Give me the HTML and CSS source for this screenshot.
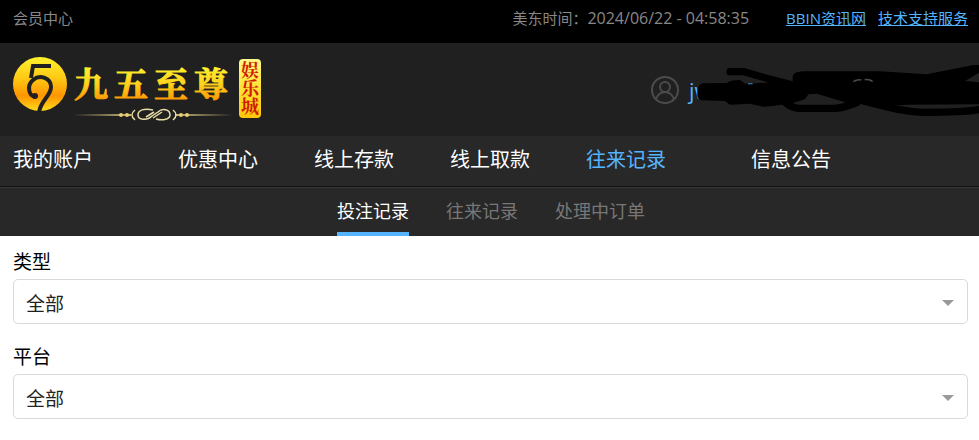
FILE: index.html
```html
<!DOCTYPE html>
<html lang="zh-CN">
<head>
    <meta charset="UTF-8">
    <meta name="viewport" content="width=device-width, initial-scale=1.0">
    <title>会员中心</title>
    <link rel="stylesheet" href="styles.css">
</head>
<body>
    <div class="topbar">
        <span>会员中心</span>
        <div class="topbar-right">
            <span class="time">美东时间：<span class="clock">2024/06/22 - 04:58:35</span></span>
            <a href="#">BBIN资讯网</a>
            <a href="#">技术支持服务</a>
        </div>
    </div>

    <header class="header">
        <svg class="logo" width="252" height="68" viewBox="0 0 252 68" role="img" aria-label="九五至尊娱乐城">
            <defs>
                <linearGradient id="gold" x1="0" y1="0" x2="0" y2="1">
                    <stop offset="0" stop-color="#fff22e"/>
                    <stop offset="0.4" stop-color="#ffc814"/>
                    <stop offset="0.72" stop-color="#ff9500"/>
                    <stop offset="1" stop-color="#ffdc1c"/>
                </linearGradient>
                <linearGradient id="goldText" gradientUnits="userSpaceOnUse" x1="0" y1="11" x2="0" y2="45">
                    <stop offset="0" stop-color="#fff22e"/>
                    <stop offset="0.5" stop-color="#ffd21c"/>
                    <stop offset="1" stop-color="#ff9500"/>
                </linearGradient>
                <linearGradient id="badge" x1="0" y1="0" x2="0" y2="1">
                    <stop offset="0" stop-color="#fff98a"/>
                    <stop offset="0.4" stop-color="#ffe640"/>
                    <stop offset="1" stop-color="#ffc60a"/>
                </linearGradient>
                <linearGradient id="line" x1="0" y1="0" x2="1" y2="0">
                    <stop offset="0" stop-color="#c9b878" stop-opacity="0"/>
                    <stop offset="1" stop-color="#c9b878"/>
                </linearGradient>
                <linearGradient id="lineEnd" x1="1" y1="0" x2="0" y2="0">
                    <stop offset="0" stop-color="#c9b878" stop-opacity="0"/>
                    <stop offset="1" stop-color="#c9b878"/>
                </linearGradient>
            </defs>
            <circle cx="27" cy="28" r="27" fill="url(#gold)"/>
            <g fill="none" stroke="#202020" stroke-width="4">
                <path d="M38 10H20L18 22"/>
                <path d="M22 41C15 39 14 29 20 24C27 18 38 22 38 31C38 40 28 44 26 56"/>
            </g>
            <circle cx="22" cy="40" r="3" fill="#202020"/>
            <g class="logo-name" fill="url(#goldText)" stroke="url(#goldText)">
                <text x="61 101 141 181" y="41">九五至尊</text>
            </g>
            <rect x="60" y="58" width="58" height="2" fill="url(#line)"/>
            <rect x="162" y="58" width="58" height="2" fill="url(#lineEnd)"/>
            <g fill="#e6cf74">
                <circle cx="108" cy="59" r="2"/>
                <circle cx="114" cy="59" r="2"/>
                <circle cx="168" cy="59" r="2"/>
                <circle cx="174" cy="59" r="2"/>
            </g>
            <g fill="none" stroke="#e8dca6" stroke-width="1.5">
                <path d="M122 54C118 57 118 61 122 64M160 54C164 57 164 61 160 64"/>
                <path d="M140 54C131 52 125 54 125 59C125 64 134 65 139 60L145 56C149 52 157 53 157 59C157 63 150 65 143 63"/>
                <path d="M133 61L141 56M140 62L149 56"/>
            </g>
            <rect x="226" y="3" width="22" height="59" rx="4" fill="url(#badge)"/>
            <text class="logo-badge" x="237" y="5">娱乐城</text>
        </svg>

        <div class="user">
            <svg class="avatar" width="28" height="28" viewBox="0 0 28 28" aria-hidden="true">
                <circle cx="14" cy="14" r="13"/>
                <circle cx="14" cy="11" r="5"/>
                <path d="M5 23C7 18 10 16 14 16C18 16 21 18 23 23"/>
            </svg>
            <span class="username">jw</span>
            <svg class="scribble" width="282" height="54" viewBox="171 33 846 162" aria-hidden="true">
                <path class="ink" d="M172 130Q172 98 190 97L260 96Q270 87 300 87L315 98L380 95L445 101L458 92L458 75Q462 62 490 61L720 61L860 70L1000 42L1017 42L1017 65L975 90L1017 94L1017 160L800 161L740 165L650 152L625 160L610 152L530 128L505 130L495 145L462 155L400 165L370 167L330 158L270 161L255 150L185 148Q172 146 172 130Z"/>
                <path class="stroke" d="M270 62L312 62L380 82L450 100"/>
                <path class="stroke" d="M430 150C445 162 455 170 475 172L585 172C610 172 620 165 650 155"/>
                <path class="stroke" d="M670 150C740 168 790 182 850 184C920 184 980 184 1020 175"/>
                <path class="hint" d="M640 92Q652 84 664 87M674 86Q690 84 698 92"/>
                <path class="hint-blue" d="M324 98H338"/>
            </svg>
        </div>
    </header>

    <nav class="nav">
        <a class="wide" href="#">我的账户</a>
        <a href="#">优惠中心</a>
        <a href="#">线上存款</a>
        <a href="#">线上取款</a>
        <a class="wide active" href="#">往来记录</a>
        <a href="#">信息公告</a>
    </nav>

    <nav class="subnav">
        <a class="active" href="#">投注记录</a>
        <a href="#">往来记录</a>
        <a href="#">处理中订单</a>
    </nav>

    <form class="filters">
        <div class="field">
            <label for="type">类型</label>
            <select id="type">
                <option>全部</option>
            </select>
        </div>
        <div class="field">
            <label for="platform">平台</label>
            <select id="platform">
                <option>全部</option>
            </select>
        </div>
    </form>
</body>
</html>
```
FILE: styles.css
```css
* {
    box-sizing: border-box;
}
body {
    margin: 0;
    background: #fff;
    color: #000;
    font-family: "Open Sans", "Noto Sans CJK SC", sans-serif;
}
a {
    color: inherit;
    text-decoration: none;
}

/* top bar */
.topbar {
    display: flex;
    justify-content: space-between;
    height: 43px;
    padding: 0 11px 0 13px;
    background: #000;
    color: #888;
    font-size: 15px;
    line-height: 37px;
}
.topbar-right {
    display: flex;
    gap: 12px;
}
.topbar-right a {
    color: #55b4ff;
    text-decoration: underline;
}
.time {
    margin-right: 25px;
}
.clock {
    font-size: 16px;
}

/* logo and user */
.header {
    display: flex;
    justify-content: space-between;
    align-items: center;
    height: 93px;
    padding-left: 13px;
    background: #202020;
    overflow: hidden;
}
.logo-name {
    font-family: "Noto Serif CJK SC", "Noto Sans CJK SC", serif;
    font-size: 34px;
    font-weight: 700;
    stroke-width: 1;
}
.logo-badge {
    fill: #d01c00;
    font-family: "Noto Serif CJK SC", "Noto Sans CJK SC", serif;
    font-size: 18px;
    font-weight: 700;
    writing-mode: vertical-rl;
}
.user {
    position: relative;
    display: flex;
    align-items: center;
    width: 328px;
}
.avatar {
    fill: none;
    stroke: #4b4b4b;
    stroke-width: 2;
}
.username {
    margin-left: 10px;
    color: #55b4ff;
    font-size: 22px;
    line-height: 28px;
}
.scribble {
    position: absolute;
    right: 0;
    top: -14px;
}
.ink {
    fill: #000;
}
.stroke {
    fill: none;
    stroke: #000;
    stroke-width: 22;
    stroke-linecap: round;
    stroke-linejoin: round;
}
.hint {
    fill: none;
    stroke: #4b4b4b;
    stroke-width: 5;
}
.hint-blue {
    stroke: #2f6a99;
    stroke-width: 4;
}

/* main menu */
.nav {
    display: flex;
    gap: 56px;
    height: 51px;
    padding: 0 13px;
    border-bottom: 1px solid #111;
    background: #282828;
    color: #fff;
    font-size: 20px;
    line-height: 47px;
}
.nav .wide {
    margin-right: 29px;
}
.nav .active {
    color: #55b4ff;
}

/* sub menu */
.subnav {
    display: flex;
    justify-content: center;
    gap: 37px;
    height: 49px;
    padding-left: 3px;
    border-top: 1px solid #383838;
    background: #282828;
    color: #777;
    font-size: 18px;
    line-height: 47px;
}
.subnav .active {
    border-bottom: 4px solid #55b4ff;
    color: #fff;
}

/* filters */
.filters {
    padding: 12px 11px 0 13px;
}
.field {
    margin-bottom: 19px;
}
.field label {
    display: block;
    margin-bottom: 3px;
    font-size: 19px;
    line-height: 28px;
}
.field select {
    display: block;
    width: 100%;
    height: 45px;
    padding: 5px 12px 0;
    border: 1px solid #d9d9d9;
    border-radius: 5px;
    background: #fff url("data:image/svg+xml,%3Csvg xmlns='http://www.w3.org/2000/svg' width='12' height='6'%3E%3Cpath d='M0 0h12L6 6z' fill='%23999'/%3E%3C/svg%3E") no-repeat right 13px top 20px;
    color: #222;
    font-family: inherit;
    font-size: 19px;
    appearance: none;
}
```
